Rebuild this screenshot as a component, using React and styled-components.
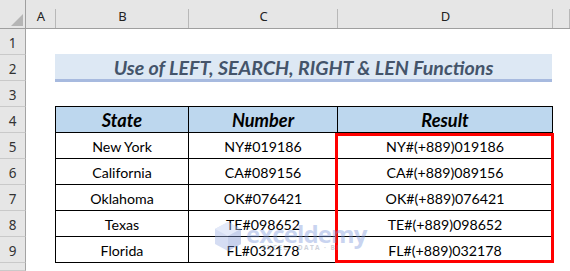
import React from 'react';
import styled, { createGlobalStyle } from 'styled-components';

const GlobalStyle = createGlobalStyle`
  html, body {
    margin: 0;
    padding: 0;
    background: #ffffff;
    overflow: hidden;
  }
  body {
    font-family: Lato, "Liberation Sans", sans-serif;
  }
`;

const Sheet = styled.div`
  position: relative;
  display: grid;
  grid-template-columns: 26px 30px 133px 149px 215px 17px;
  grid-template-rows: 29px repeat(9, 26px) 8px;
  width: 570px;
  height: 271px;
  overflow: hidden;
`;

const Corner = styled.div`
  grid-column: 1;
  grid-row: 1;
  background: #e6e6e6;
  border-bottom: 1px solid #9f9f9f;
  border-right: 1px solid #9f9f9f;
  box-sizing: border-box;
  display: flex;
  align-items: flex-end;
  justify-content: flex-end;
  padding: 0 2px 2px 0;
`;

const ColHead = styled.div`
  grid-row: 1;
  grid-column: ${p => p.$col};
  box-sizing: border-box;
  border-bottom: 1px solid #9f9f9f;
  background:
    linear-gradient(to bottom, transparent 9px, #b8b8b8 9px) right top / 1px 100% no-repeat,
    #e6e6e6;
  display: flex;
  align-items: center;
  justify-content: center;
  padding-top: 4px;
  font-family: "Noto Sans", "Liberation Sans", sans-serif;
  font-size: 13px;
  color: #222222;
`;

const RowHead = styled.div`
  grid-column: 1;
  grid-row: ${p => p.$row};
  box-sizing: border-box;
  background: #e6e6e6;
  border-right: 1px solid #a3a3a3;
  border-bottom: 1px solid #c9c9c9;
  display: flex;
  align-items: center;
  justify-content: center;
  padding-top: 3px;
  font-family: "Noto Sans", "Liberation Sans", sans-serif;
  font-size: 13.5px;
  color: #333333;
`;

const TitleBand = styled.div`
  grid-column: 3 / 6;
  grid-row: 3;
  margin: -1px 1px -1px -1px;
  box-sizing: border-box;
  background: #dde8f4;
  border-bottom: 3px solid #a7badf;
  display: flex;
  align-items: center;
  justify-content: center;
  padding-top: 1px;
  font-size: 19.6px;
  font-weight: 700;
  font-style: italic;
  color: #44546a;
`;

const Table = styled.div`
  grid-column: 3 / 6;
  grid-row: 5 / 11;
  margin: -1px 0 0 -1px;
  display: grid;
  grid-template-columns: 133px 149px 215px;
  grid-auto-rows: 26px;
  border-top: 1px solid #000000;
  border-left: 1px solid #000000;
`;

const Cell = styled.div`
  box-sizing: border-box;
  border-right: 1px solid #000000;
  border-bottom: 1px solid #000000;
  background: ${p => (p.$head ? '#bdd7ee' : '#ffffff')};
  display: flex;
  align-items: center;
  justify-content: center;
  padding-top: 1px;
  font-size: ${p => (p.$head ? '18.2px' : '14.2px')};
  font-weight: ${p => (p.$head ? 700 : 400)};
  font-style: ${p => (p.$head ? 'italic' : 'normal')};
  color: #000000;
`;

const Highlight = styled.div`
  grid-column: 5;
  grid-row: 6 / 11;
  margin: 0 -1px 0 -3px;
  border: 3px solid #ff0000;
  pointer-events: none;
`;

const Watermark = styled.div`
  position: absolute;
  left: 213px;
  top: 221px;
  display: flex;
  align-items: flex-start;
  gap: 3px;
  opacity: 0.42;
  pointer-events: none;
`;

const Brand = styled.div`
  display: flex;
  flex-direction: column;
  line-height: 1;
  margin-top: 1px;
`;

const BrandName = styled.span`
  font-family: "Open Sans", "Liberation Sans", sans-serif;
  font-size: 24px;
  font-weight: 700;
  color: #7f9bdc;
  letter-spacing: -0.9px;
`;

const BrandTag = styled.span`
  font-family: "Open Sans", "Liberation Sans", sans-serif;
  font-size: 6.5px;
  font-weight: 700;
  letter-spacing: 1.4px;
  color: #8a93a8;
  margin: -1px 0 0 16px;
`;

const rows = [
  ['New York', 'NY#019186', 'NY#(+889)019186'],
  ['California', 'CA#089156', 'CA#(+889)089156'],
  ['Oklahoma', 'OK#076421', 'OK#(+889)076421'],
  ['Texas', 'TE#098652', 'TE#(+889)098652'],
  ['Florida', 'FL#032178', 'FL#(+889)032178'],
];

function CubeLogo() {
  return (
    <svg width="30" height="31" viewBox="0 0 30 31">
      <polygon points="15,1 28,8 28,23 15,30 2,23 2,8" fill="#9cb0e3" />
      <polygon points="15,1 28,8 15,15 2,8" fill="#c0cef1" />
      <polygon points="15,15 28,8 28,23 15,30" fill="#7b94d4" />
    </svg>
  );
}

export default function App() {
  return (
    <>
      <GlobalStyle />
      <Sheet>
        <Corner>
          <svg width="12" height="12" viewBox="0 0 12 12">
            <polygon points="12,0 12,12 0,12" fill="#b5b5b5" />
          </svg>
        </Corner>
        {['A', 'B', 'C', 'D', ''].map((l, i) => (
          <ColHead key={i} $col={i + 2}>{l}</ColHead>
        ))}
        {[1, 2, 3, 4, 5, 6, 7, 8, 9, ''].map((n, i) => (
          <RowHead key={i} $row={i + 2}>{n}</RowHead>
        ))}

        <TitleBand>Use of LEFT, SEARCH, RIGHT &amp; LEN Functions</TitleBand>

        <Table>
          <Cell $head>State</Cell>
          <Cell $head>Number</Cell>
          <Cell $head>Result</Cell>
          {rows.map(r => r.map((v, j) => <Cell key={r[0] + j}>{v}</Cell>))}
        </Table>

        <Highlight />

        <Watermark>
          <CubeLogo />
          <Brand>
            <BrandName>exceldemy</BrandName>
            <BrandTag>EXCEL · DATA · BI</BrandTag>
          </Brand>
        </Watermark>
      </Sheet>
    </>
  );
}
